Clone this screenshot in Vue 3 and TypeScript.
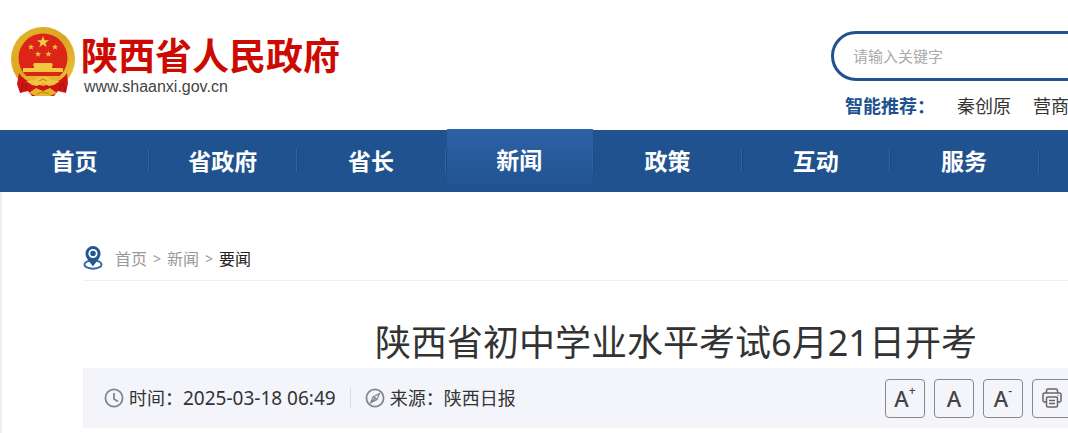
<script setup lang="ts">
import { ref } from 'vue'

const navItems: string[] = ['首页', '省政府', '省长', '新闻', '政策', '互动', '服务']
const active = ref('新闻')
const keyword = ref('')
const hotWords: string[] = ['秦创原', '营商环境']
const sizeButtons = [
  { mark: '+', label: '放大字号' },
  { mark: '', label: '默认字号' },
  { mark: '-', label: '缩小字号' },
]
</script>

<template>
  <div class="viewport">
    <div class="page">
      <header class="header">
        <a class="brand" href="#">
          <svg class="emblem" viewBox="0 0 64 70" aria-hidden="true">
            <defs>
              <linearGradient id="gold" x1="0" y1="0" x2="1" y2="1">
                <stop offset="0" stop-color="#e4b62d" />
                <stop offset="0.5" stop-color="#d9a520" />
                <stop offset="1" stop-color="#efc83e" />
              </linearGradient>
            </defs>
            <circle cx="32" cy="32" r="32" fill="url(#gold)" />
            <circle cx="32" cy="31" r="24.5" fill="#dc2419" />
            <path d="M32 9l1.500 4.200h4.500l-3.600 2.700 1.300 4.300-3.700-2.600-3.700 2.600 1.300-4.300-3.600-2.700h4.500z" fill="#f4cf45" />
            <g fill="#eebc38">
              <path id="star" d="M20 17l.8 2.1h2.3l-1.8 1.4.7 2.2-2-1.3-2 1.3.7-2.2-1.8-1.4h2.3z" />
              <use href="#star" x="24" />
              <use href="#star" x="7" y="7" />
              <use href="#star" x="17.500" y="7" />
            </g>
            <path d="M23 36h18l1 3h-1v2h11v4H12v-4h11v-2h-1z" fill="#f1c940" />
            <path d="M12 49h40c-2 3-5 5-8 6H20c-3-1-6-3-8-6z" fill="#e4b52b" />
            <path d="M8 46c3 5 8 8 14 10l10 3 10-3c6-2 11-5 14-10l1 10-2 10-8-2-4 5H21l-4-5-8 2-3-9z" fill="#cf1414" />
            <path d="M15 54l9-1 3-3h10l3 3 9 1-6 4-5 1-6-3-6 3-5-1z" fill="#efc440" />
            <path d="M18 66l7-5 7 3 7-3 7 5-7 3H25z" fill="#e6b52b" />
            <path d="M28 54l4-2 4 2M26 67l6-2 6 2" fill="none" stroke="#c98a1c" stroke-width="1.200" />
            <path d="M12 56l-2 8M15 57v6M52 56l2 8M49 57v6" stroke="#a60c0c" />
          </svg>
          <span class="brand-text">
            <strong>陕西省人民政府</strong>
            <span class="domain">www.shaanxi.gov.cn</span>
          </span>
        </a>
        <form class="search" @submit.prevent>
          <input v-model="keyword" type="text" placeholder="请输入关键字" aria-label="请输入关键字" />
          <div class="hot">
            <b>智能推荐：</b>
            <a v-for="word in hotWords" :key="word" href="#">{{ word }}</a>
          </div>
        </form>
      </header>

      <nav class="nav">
        <a
          v-for="item in navItems"
          :key="item"
          href="#"
          :class="{ active: item === active }"
          @click.prevent="active = item"
        ><span>{{ item }}</span></a>
      </nav>

      <main class="main">
        <nav class="crumbs">
          <svg viewBox="0 0 20 24" aria-hidden="true">
            <ellipse cx="10" cy="18.500" rx="8.600" ry="4.200" fill="#fff" stroke="#3c69a3" stroke-width="2" />
            <path d="M10 0a7.500 7.500 0 0 1 7.500 7.500c0 5-5 9-7.500 13-2.500-4-7.500-8-7.500-13A7.500 7.500 0 0 1 10 0z" fill="#24568f" />
            <circle cx="10" cy="7.500" r="3.700" fill="#24568f" stroke="#fff" stroke-width="1.800" />
          </svg>
          <a href="#">首页</a><i>&gt;</i><a href="#">新闻</a><i>&gt;</i><a class="here" href="#">要闻</a>
        </nav>
        <h1>陕西省初中学业水平考试6月21日开考</h1>
        <div class="meta">
          <span class="info">
            <svg viewBox="0 0 20 20" aria-hidden="true">
              <circle cx="10" cy="10" r="8.600" />
              <path d="M10 5v6l4 2.500" />
            </svg>
            时间：<time>2025-03-18 06:49</time>
          </span>
          <span class="info source">
            <svg viewBox="0 0 20 20" aria-hidden="true">
              <circle cx="10" cy="10" r="8.600" />
              <path class="thin" d="M14.500 5.500l-2.500 6-6.500 3.500 2.500-6zM8 9l4 2.500M6 14.500l5-5" />
            </svg>
            来源：陕西日报
          </span>
          <div class="tools">
            <button v-for="button in sizeButtons" :key="button.label" type="button" :aria-label="button.label">
              A<sup v-if="button.mark">{{ button.mark }}</sup>
            </button>
            <button type="button" aria-label="打印">
              <svg viewBox="0 0 20 20" aria-hidden="true">
                <path d="M4.500 5V2.500a1.500 1.500 0 0 1 1.500-1.500h8a1.500 1.500 0 0 1 1.500 1.500V5" />
                <path d="M4 14H2.500A1.500 1.500 0 0 1 1 12.500v-6A1.500 1.500 0 0 1 2.500 5h15A1.500 1.500 0 0 1 19 6.500v6a1.500 1.500 0 0 1-1.500 1.500H16" />
                <rect x="4.500" y="9" width="11" height="10" rx="1.500" />
                <path d="M7 12.500h6M7 15.500h6M15.500 7.500h1" />
              </svg>
            </button>
          </div>
        </div>
      </main>
    </div>
  </div>
</template>

<style>
body {
  margin: 0;
  background: #fff;
}
</style>

<style scoped>
.viewport {
  overflow: hidden;
  font-family: "Noto Sans", "Noto Sans CJK SC", sans-serif;
  color: #333;
}
.page {
  width: 125%;
}
a {
  color: inherit;
  text-decoration: none;
}
.header {
  display: flex;
  justify-content: space-between;
  box-sizing: border-box;
  min-height: 130px;
  padding: 27px 66px 0 11px;
}
.brand {
  display: flex;
  align-items: flex-start;
  gap: 6px;
}
.emblem {
  width: 64px;
  height: 70px;
}
.brand-text {
  display: flex;
  flex-direction: column;
  padding-top: 9px;
}
.brand-text strong {
  font-size: 37px;
  line-height: 40px;
  color: #cd0a02;
}
.domain {
  padding-left: 3px;
  font: 16px/22px "Liberation Sans", sans-serif;
  color: #444;
}
.search {
  width: 438px;
  padding-top: 4px;
}
.search input {
  box-sizing: border-box;
  width: 100%;
  height: 50px;
  padding: 0 19px;
  border: 3px solid #20528f;
  border-radius: 25px;
  outline: none;
  background: #fff;
  font: inherit;
  font-size: 15px;
}
.search input::placeholder {
  color: #aaa;
  opacity: 1;
}
.hot {
  display: flex;
  gap: 22px;
  padding: 10px 0 0 14px;
  font-size: 18px;
  line-height: 30px;
}
.hot b {
  color: #20528f;
}
.nav {
  display: grid;
  grid-template-columns: repeat(9, 1fr);
  height: 62px;
  padding-left: 1px;
  background: #20528f;
}
.nav a {
  display: flex;
  align-items: center;
  height: 62px;
  color: #fff;
  font-size: 23px;
  font-weight: 700;
}
.nav span {
  flex: 1;
  line-height: 24px;
  text-align: center;
  border-right: 1px solid #34639c;
  box-shadow: 1px 0 #1b4982;
}
.nav a.active {
  margin: -1px 1px 0;
  background: linear-gradient(#2c62a6, #20528f);
}
.main {
  padding: 44px 66px 5px 81px;
  border-left: 2px solid #eee;
}
.crumbs {
  display: flex;
  align-items: center;
  gap: 6px;
  height: 44px;
  border-bottom: 1px solid #eee;
  color: #999;
  font-size: 16px;
}
.crumbs svg {
  width: 20px;
  height: 24px;
  margin-right: 6px;
}
.crumbs i {
  font-size: 14px;
  font-style: normal;
}
.crumbs .here {
  color: #222;
}
h1 {
  margin: 37px 0 0;
  font-size: 36px;
  font-weight: 400;
  line-height: 50px;
  text-align: center;
}
.meta {
  display: flex;
  align-items: center;
  height: 60px;
  padding: 0 197px 0 21px;
  background: #f4f5fb;
  font-size: 18px;
}
.info {
  display: flex;
  align-items: center;
  line-height: 20px;
}
.info time {
  font-size: 19px;
}
.info svg {
  width: 20px;
  height: 20px;
  margin-right: 5px;
}
.meta svg {
  fill: none;
  stroke: #85868b;
  stroke-width: 1.8;
}
.meta .thin {
  stroke-width: 1.2;
}
.source {
  margin-left: 14px;
  padding-left: 14px;
  border-left: 1px solid #ddd;
}
.tools {
  display: flex;
  gap: 9px;
  margin-left: auto;
}
.tools button {
  display: flex;
  align-items: center;
  justify-content: center;
  width: 40px;
  height: 39px;
  padding: 0;
  border: 1px solid #888;
  border-radius: 4px;
  background: transparent;
  color: #444;
  font: 500 22px/30px "Noto Sans", sans-serif;
}
.tools sup {
  align-self: flex-start;
  padding-top: 4px;
  font-size: 12px;
  line-height: 14px;
}
.tools svg {
  width: 20px;
  height: 20px;
  stroke: #666;
  stroke-width: 1.5;
}
</style>
